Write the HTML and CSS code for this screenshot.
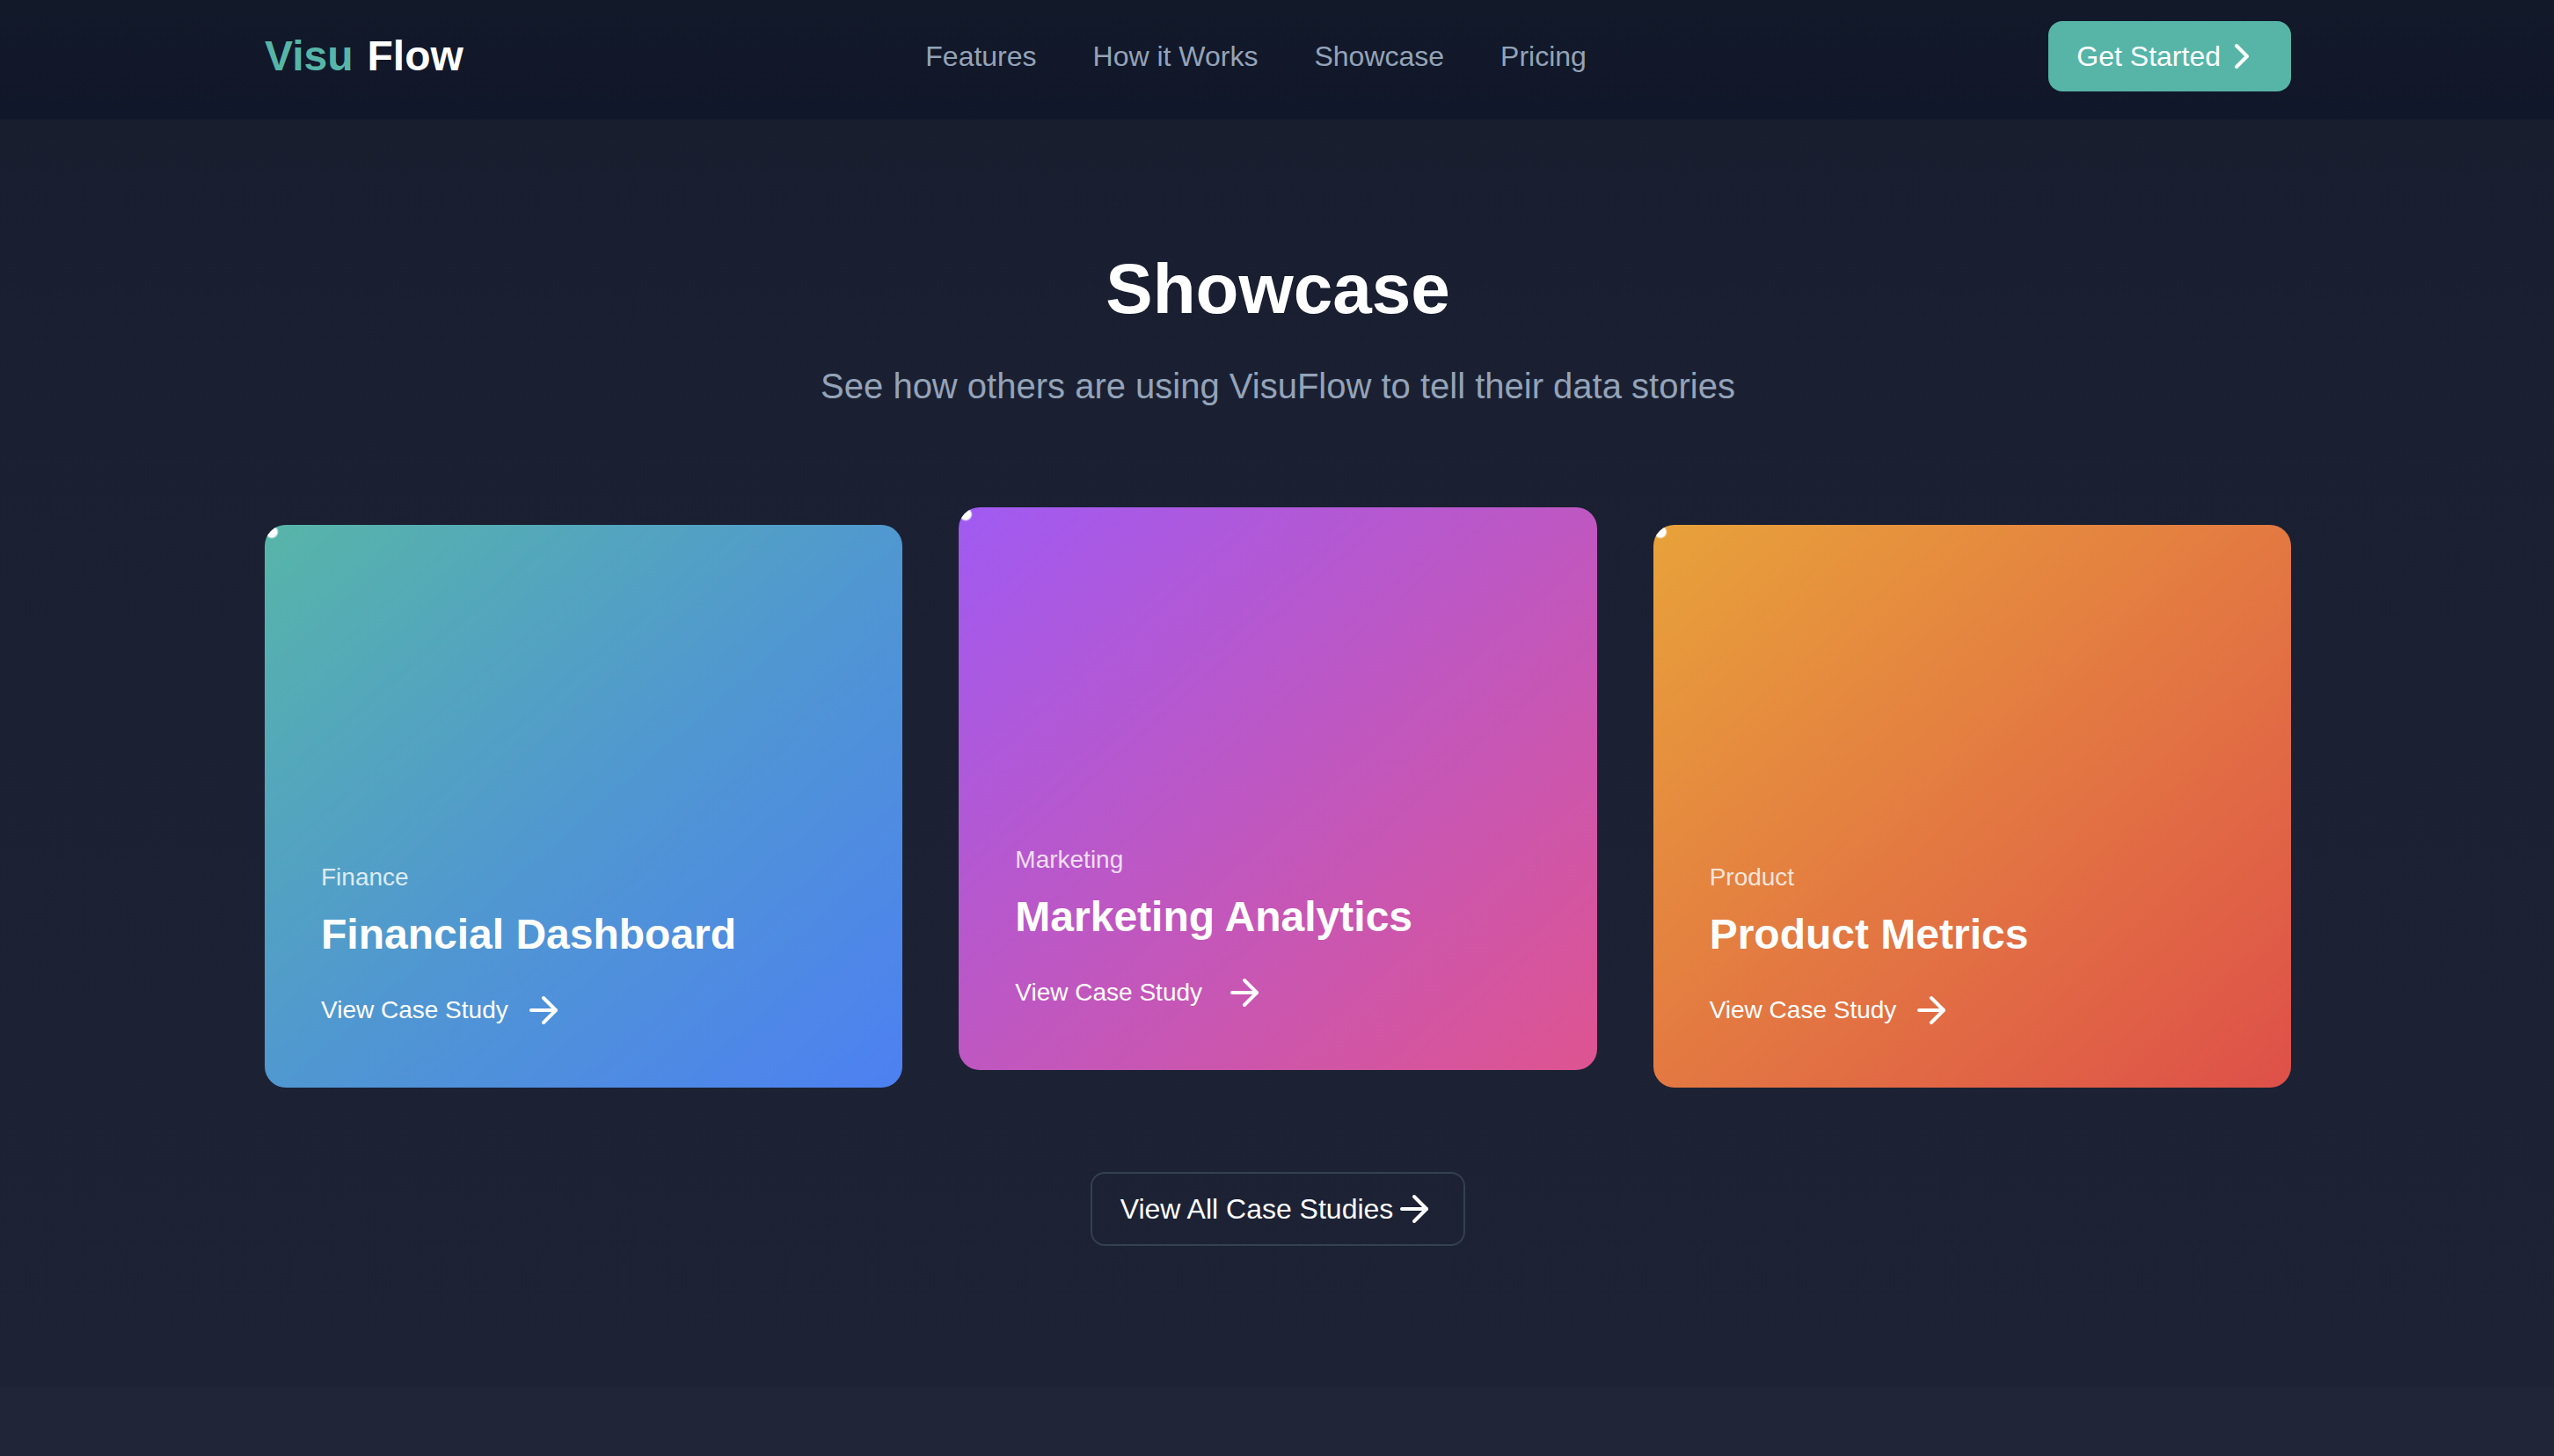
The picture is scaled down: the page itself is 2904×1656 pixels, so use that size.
FILE: index.html
```html
<!DOCTYPE html>
<html lang="en">
<head>
  <meta charset="utf-8">
  <meta name="viewport" content="width=device-width, initial-scale=1">
  <title>Visu Flow</title>
  <link rel="stylesheet" href="styles.css">
</head>
<body>
  <header class="site-header">
    <div class="container header-row">
      <a class="logo" href="#"><span class="logo-accent">Visu</span> <span>Flow</span></a>
      <nav class="nav" aria-label="Main">
        <a href="#features">Features</a>
        <a href="#how">How it Works</a>
        <a href="#showcase">Showcase</a>
        <a href="#pricing">Pricing</a>
      </nav>
      <button class="button button-primary" type="button">Get Started<svg class="icon" viewBox="0 0 24 24" aria-hidden="true"><path d="m9 18 6-6-6-6"/></svg></button>
    </div>
  </header>

  <main>
    <section class="showcase" id="showcase">
      <div class="container">
        <h2 class="section-title">Showcase</h2>
        <p class="section-lead">See how others are using VisuFlow to tell their data stories</p>

        <div class="cards">
          <article class="card card-finance">
            <p class="card-tag">Finance</p>
            <h3 class="card-title">Financial Dashboard</h3>
            <a class="card-link" href="#finance">View Case Study<svg class="icon" viewBox="0 0 24 24" aria-hidden="true"><path d="M5 12h14"/><path d="m12 5 7 7-7 7"/></svg></a>
          </article>
          <article class="card card-marketing card-raised">
            <p class="card-tag">Marketing</p>
            <h3 class="card-title">Marketing Analytics</h3>
            <a class="card-link" href="#marketing">View Case Study<svg class="icon" viewBox="0 0 24 24" aria-hidden="true"><path d="M5 12h14"/><path d="m12 5 7 7-7 7"/></svg></a>
          </article>
          <article class="card card-product">
            <p class="card-tag">Product</p>
            <h3 class="card-title">Product Metrics</h3>
            <a class="card-link" href="#product">View Case Study<svg class="icon" viewBox="0 0 24 24" aria-hidden="true"><path d="M5 12h14"/><path d="m12 5 7 7-7 7"/></svg></a>
          </article>
        </div>

        <div class="more">
          <button class="button button-outline" type="button">View All Case Studies<svg class="icon" viewBox="0 0 24 24" aria-hidden="true"><path d="M5 12h14"/><path d="m12 5 7 7-7 7"/></svg></button>
        </div>
      </div>
    </section>
  </main>
</body>
</html>
```
FILE: styles.css
```css
* {
  box-sizing: border-box;
  margin: 0;
}

body {
  min-height: 100vh;
  background: #202637;
  color: #fff;
  font-family: "Liberation Sans", Arial, Helvetica, sans-serif;
  font-size: 32px;
  line-height: 48px;
}

a {
  color: inherit;
  text-decoration: none;
}

.container {
  max-width: 2434px;
  margin: 0 auto;
  padding: 0 64px 0 66px;
}

.icon {
  flex: none;
  width: 48px;
  height: 48px;
  fill: none;
  stroke: currentColor;
  stroke-width: 2;
  stroke-linecap: round;
  stroke-linejoin: round;
}

/* Header */
.site-header {
  padding: 24px 0 32px;
  background: linear-gradient(#121929, #11172a);
}

.header-row {
  display: flex;
  align-items: center;
  justify-content: space-between;
}

.logo {
  display: flex;
  gap: 16px;
  font-size: 48px;
  font-weight: 700;
}

.logo-accent {
  color: #57b5a8;
}

.nav {
  display: flex;
  gap: 64px;
  color: #94a3b8;
}

/* Buttons */
.button {
  display: inline-flex;
  align-items: center;
  padding: 16px 32px;
  border: 0;
  border-radius: 16px;
  background: none;
  color: #fff;
  font: inherit;
  cursor: pointer;
}

.button-primary {
  background: #57b5a8;
}

.button-outline {
  border: 2px solid #334151;
}

/* Showcase */
.showcase {
  padding: 153px 0 160px;
  background: linear-gradient(#181e2e, #1a2032 20%, #1d2235);
}

.section-title {
  margin-bottom: 42px;
  font-size: 80px;
  line-height: 80px;
  text-align: center;
}

.section-lead {
  margin-bottom: 130px;
  color: #94a3b8;
  font-size: 40px;
  line-height: 56px;
  text-align: center;
}

.cards {
  display: grid;
  grid-template-columns: repeat(3, 1fr);
  gap: 64px;
}

.card {
  position: relative;
  display: flex;
  flex-direction: column;
  align-items: flex-start;
  justify-content: flex-end;
  min-height: 640px;
  padding: 64px;
  border-radius: 24px;
  overflow: hidden;
}

/* Glint in the corner of each card */
.card::before {
  content: "";
  position: absolute;
  top: 0;
  left: 0;
  width: 16px;
  height: 16px;
  background: radial-gradient(circle closest-side, #fff 70%, transparent);
}

.card-finance {
  background: linear-gradient(to bottom right, #57b5a8, #5098d0 50%, #4d80f2);
}

.card-marketing {
  background: linear-gradient(to bottom right, #a05af2, #de5490);
}

.card-product {
  background: linear-gradient(to bottom right, #e8a23a, #de5049);
}

.card-raised {
  transform: translateY(-20px);
}

.card-tag {
  margin-bottom: 16px;
  font-size: 28px;
  line-height: 38px;
  opacity: 0.8;
}

.card-title {
  margin-bottom: 32px;
  font-size: 48px;
  line-height: 60px;
}

.card-link {
  display: flex;
  align-items: center;
  gap: 16px;
  font-size: 28px;
}

.card-raised .card-link {
  gap: 24px;
}

.more {
  display: flex;
  justify-content: center;
  margin-top: 96px;
}
```
